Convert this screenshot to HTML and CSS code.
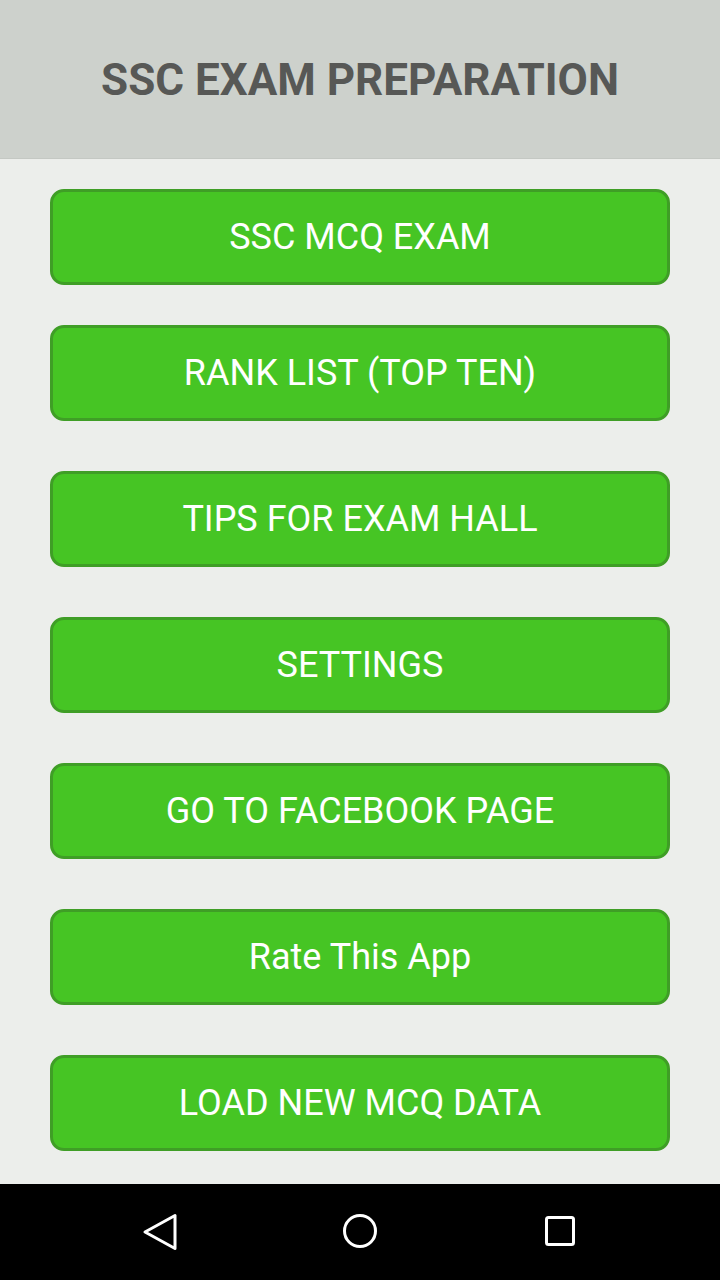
FILE: index.html
```
<!DOCTYPE html>
<html lang="en">
<head>
  <meta charset="UTF-8">
  <meta name="viewport" content="width=device-width, initial-scale=1.0">
  <title>SSC Exam Preparation</title>
  <link rel="stylesheet" href="styles.css">
</head>
<body>
  <div class="screen">
    <header class="header">
      <h1>SSC EXAM PREPARATION</h1>
    </header>

    <main class="menu">
      <button class="menu-btn first">SSC MCQ EXAM</button>
      <button class="menu-btn">RANK LIST (TOP TEN)</button>
      <button class="menu-btn">TIPS FOR EXAM HALL</button>
      <button class="menu-btn">SETTINGS</button>
      <button class="menu-btn">GO TO FACEBOOK PAGE</button>
      <button class="menu-btn">Rate This App</button>
      <button class="menu-btn">LOAD NEW MCQ DATA</button>
    </main>

    <nav class="navbar">
      <svg width="40" height="40" viewBox="0 0 40 40" aria-label="Back">
        <path d="M35 3.5 L35 36.5 L5 20 Z" fill="none" stroke="#fff" stroke-width="3" stroke-linejoin="round"/>
      </svg>
      <svg width="40" height="40" viewBox="0 0 40 40" aria-label="Home">
        <circle cx="20" cy="19" r="15.5" fill="none" stroke="#fff" stroke-width="3"/>
      </svg>
      <svg width="40" height="40" viewBox="0 0 40 40" aria-label="Recents">
        <rect x="6.5" y="5.5" width="27" height="27" rx="2" fill="none" stroke="#fff" stroke-width="3"/>
      </svg>
    </nav>
  </div>
</body>
</html>
```

FILE: styles.css
```
body {
  margin: 0;
  font-family: Roboto, "Liberation Sans", sans-serif;
  background: #eceeeb;
}
.screen {
  width: 720px;
  height: 1280px;
  display: flex;
  flex-direction: column;
}
.header {
  flex-shrink: 0;
  height: 158px;
  background: #cdd1cc;
  border-bottom: 1px solid #c4c8c3;
  display: flex;
  align-items: center;
  justify-content: center;
}
.header h1 {
  margin: 0 0 -2px 0;
  font-size: 44px;
  font-weight: bold;
  color: #575856;
}
.menu {
  flex: 1;
  min-height: 0;
  display: flex;
  flex-direction: column;
  padding: 30px 50px 0 50px;
}
.menu-btn {
  flex-shrink: 0;
  height: 96px;
  margin-bottom: 50px;
  border: 3px solid #3f9e26;
  border-radius: 14px;
  background: #46c524;
  color: #fff;
  font-family: Roboto, "Liberation Sans", sans-serif;
  font-size: 36px;
  padding: 0;
}
.menu-btn.first {
  margin-bottom: 40px;
}
.menu-btn:last-child {
  margin-bottom: 0;
}
.navbar {
  flex-shrink: 0;
  height: 96px;
  background: #000;
  display: flex;
  align-items: center;
  justify-content: space-between;
  padding: 0 140px;
}
```
